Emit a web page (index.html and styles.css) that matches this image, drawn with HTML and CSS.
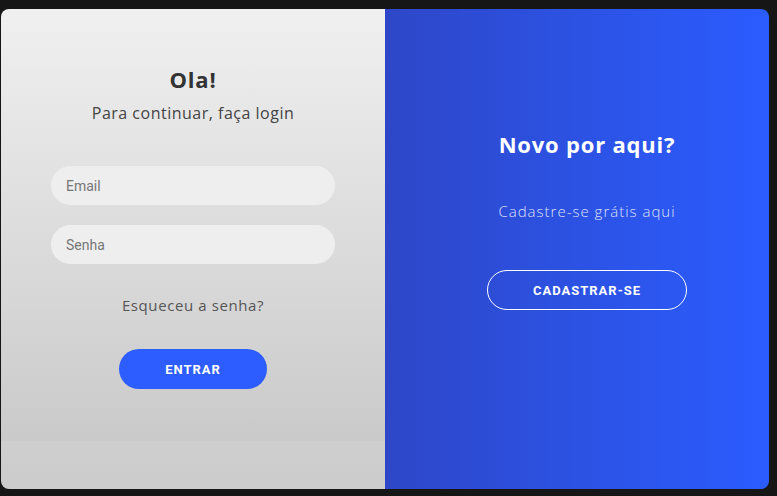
FILE: index.html
```html
<!DOCTYPE html>
<html lang="pt">
<head>
<meta charset="utf-8">
<title>Login</title>
<link rel="stylesheet" href="styles.css">
</head>
<body>
<div class="card">
  <section class="login">
    <h1 class="title">Ola!</h1>
    <p class="subtitle">Para continuar, faça login</p>
    <input class="field field-first" type="text" placeholder="Email">
    <input class="field field-second" type="password" placeholder="Senha">
    <a class="forgot" href="#">Esqueceu a senha?</a>
    <button class="btn-primary">ENTRAR</button>
  </section>
  <section class="signup">
    <h2 class="title title-light">Novo por aqui?</h2>
    <p class="signup-text">Cadastre-se grátis aqui</p>
    <button class="btn-outline">CADASTRAR-SE</button>
  </section>
</div>
</body>
</html>
```
FILE: styles.css
```css
* { box-sizing: border-box; }
html, body { margin: 0; padding: 0; }
body {
  background: #161616;
  width: 777px;
  height: 496px;
  overflow: hidden;
  font-family: "Open Sans", "DejaVu Sans", sans-serif;
}
.card {
  margin: 9px 0 0 1px;
  width: 768px;
  height: 480px;
  border-radius: 8px;
  overflow: hidden;
  display: grid;
  grid-template-columns: 384px 384px;
}
.login {
  background: linear-gradient(180deg, #f0f0f0 0, #cacaca 432px, #cfcfcf 432px, #cbcbcb 100%);
  display: flex;
  flex-direction: column;
  align-items: center;
  padding-top: 56px;
}
.title {
  margin: 0;
  font-size: 22px;
  line-height: 28px;
  font-weight: 700;
  letter-spacing: 0.8px;
  color: #333;
}
.title-light { color: #fff; }
.subtitle {
  margin: 10px 0 0;
  font-size: 16px;
  line-height: 20px;
  letter-spacing: 0.5px;
  color: #444;
}
.field {
  width: 284px;
  height: 39px;
  border: none;
  outline: none;
  border-radius: 20px;
  background: #eeeeee;
  padding: 0 15px;
  font-family: Roboto, "Liberation Sans", sans-serif;
  font-size: 14px;
  color: #555;
}
.field::placeholder { color: #777; }
.field-first { margin-top: 43px; }
.field-second { margin-top: 20px; }
.forgot {
  margin-top: 31px;
  font-size: 15px;
  line-height: 20px;
  letter-spacing: 0.6px;
  color: #555;
  text-decoration: none;
}
.btn-primary {
  margin-top: 34px;
  width: 148px;
  height: 40px;
  border: none;
  border-radius: 20px;
  background: #2d5cff;
  color: #fff;
  font-family: Roboto, "Liberation Sans", sans-serif;
  font-weight: 700;
  font-size: 13px;
  letter-spacing: 1px;
}
.signup {
  background: linear-gradient(90deg, #2e47c8 0%, #2c53e6 55%, #2b5cff 100%);
  display: flex;
  flex-direction: column;
  align-items: center;
  padding: 121px 0 0 20px;
}
.signup-text {
  margin: 43px 0 0;
  font-size: 15px;
  line-height: 20px;
  letter-spacing: 1px;
  color: #dde1fb;
  font-weight: 300;
}
.btn-outline {
  margin-top: 49px;
  width: 200px;
  height: 40px;
  border: 1px solid #fff;
  border-radius: 20px;
  background: transparent;
  color: #fff;
  font-family: Roboto, "Liberation Sans", sans-serif;
  font-weight: 700;
  font-size: 13px;
  letter-spacing: 1px;
}
```
